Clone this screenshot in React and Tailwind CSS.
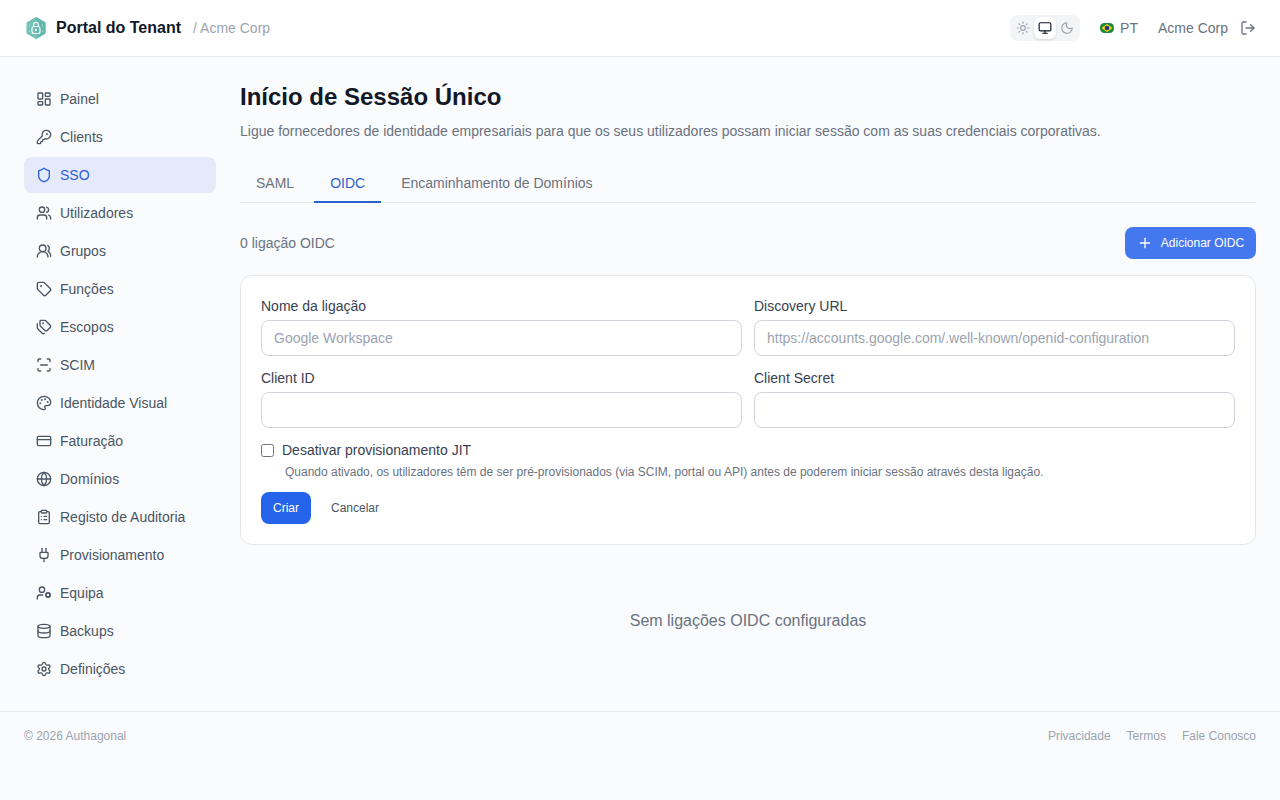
import React from "react";
import { LayoutDashboard, KeyRound, Shield, Users, UsersRound, Tag, Tags, ScanLine, Palette, CreditCard, Globe, ClipboardList, Plug, UserCog, Database, Settings, Sun, Monitor, Moon, LogOut, Plus } from "lucide-react";

const nav = [
  ["Painel", LayoutDashboard], ["Clients", KeyRound], ["SSO", Shield], ["Utilizadores", Users], ["Grupos", UsersRound],
  ["Funções", Tag], ["Escopos", Tags], ["SCIM", ScanLine], ["Identidade Visual", Palette], ["Faturação", CreditCard],
  ["Domínios", Globe], ["Registo de Auditoria", ClipboardList], ["Provisionamento", Plug], ["Equipa", UserCog],
  ["Backups", Database], ["Definições", Settings],
];

function Logo() {
  return (
    <svg width="24" height="24" viewBox="0 0 24 24" fill="none">
      <path d="M12 1 21.500 6.500v11L12 23 2.500 17.500V6.500Z" fill="#72c2b8" />
      <path d="M12 1 21.500 6.500v11L12 23Z" fill="#65b8ae" />
      <rect x="8" y="10.500" width="8" height="7" rx="2" stroke="#fff" strokeWidth="1.100" />
      <path d="M9.700 10.500V8.500a2.300 2.300 0 0 1 4.600 0v2" stroke="#fff" strokeWidth="1.100" />
      <circle cx="12" cy="14" r="1.100" fill="#fff" />
      <g fill="#d5efeb">
        <circle cx="5.500" cy="9" r=".6" />
        <circle cx="18.500" cy="9" r=".6" />
        <circle cx="5.500" cy="15" r=".6" />
        <circle cx="18.500" cy="15" r=".6" />
        <circle cx="12" cy="20" r=".6" />
      </g>
    </svg>
  );
}

function Flag() {
  return (
    <svg width="14" height="14" viewBox="0 0 14 14">
      <rect x="0" y="2" width="14" height="10" rx="4.500" fill="#1b8a3a" />
      <path d="M7 3 12.500 7 7 11 1.500 7Z" fill="#f4d516" />
      <circle cx="7" cy="7" r="2.300" fill="#24357f" />
    </svg>
  );
}

function Field({ label, placeholder }) {
  return (
    <div className="flex flex-col">
      <label className="text-sm leading-5 text-[#374151] mb-1">{label}</label>
      <input placeholder={placeholder} className="h-9 w-full rounded-lg border border-[#d1d5db] bg-white px-3 text-sm text-[#111827] placeholder:text-[#9ca3af] outline-none" />
    </div>
  );
}

export default function App() {
  return (
    <div className="min-h-[800px] bg-[#f9fbfd] flex flex-col font-['Liberation_Sans',Arial,sans-serif]">
      <header className="h-[57px] shrink-0 bg-white border-b border-[#e5e7eb] flex items-center justify-between px-6">
        <div className="flex items-center">
          <Logo />
          <span className="ml-2 text-base font-bold text-[#111827]">Portal do Tenant</span>
          <span className="ml-3 text-sm text-[#9ca3af]">/ Acme Corp</span>
        </div>
        <div className="flex items-center">
          <div className="flex items-center justify-center rounded-lg bg-[#f3f4f6] h-[26px] w-[70px]">
            <span className="w-[22px] h-[22px] flex items-center justify-center text-[#9ca3af]"><Sun size={14} /></span>
            <span className="w-[22px] h-[22px] flex items-center justify-center rounded-md bg-white text-[#111827] shadow-sm"><Monitor size={14} /></span>
            <span className="w-[22px] h-[22px] flex items-center justify-center text-[#9ca3af]"><Moon size={14} /></span>
          </div>
          <span className="ml-5 flex items-center gap-1.5 text-sm text-[#6b7280]"><Flag />PT</span>
          <span className="ml-5 text-sm text-[#6b7280]">Acme Corp</span>
          <LogOut size={16} className="ml-3 text-[#6b7280]" />
        </div>
      </header>

      <div className="flex flex-1">
        <aside className="w-[240px] shrink-0 pl-6 pr-6 pt-6">
          <nav className="flex flex-col gap-0.5">
            {nav.map(([name, Icon]) => {
              const active = name === "SSO";
              return (
                <div key={name} className={`h-9 flex items-center gap-2 px-3 rounded-lg text-sm ${active ? "bg-[#e4eafa] text-[#2b60d0]" : "text-[#4b5563]"}`}>
                  <Icon size={16} />
                  <span>{name}</span>
                </div>
              );
            })}
          </nav>
        </aside>

        <main className="flex-1 pr-6 pt-6">
          <h1 className="text-2xl leading-8 font-bold text-[#111827]">Início de Sessão Único</h1>
          <p className="mt-2 text-sm leading-5 text-[#6b7280]">Ligue fornecedores de identidade empresariais para que os seus utilizadores possam iniciar sessão com as suas credenciais corporativas.</p>

          <div className="mt-6 flex gap-1 border-b border-[#e5e7eb] h-[38px] text-sm">
            <div className="px-4 pt-2 text-[#6b7280]">SAML</div>
            <div className="px-4 pt-2 text-[#2b60d0] border-b-2 border-[#2b60d0] -mb-px">OIDC</div>
            <div className="px-4 pt-2 text-[#6b7280]">Encaminhamento de Domínios</div>
          </div>

          <div className="mt-6 flex items-center justify-between">
            <span className="text-sm text-[#6b7280]">0 ligação OIDC</span>
            <button className="h-8 w-[131px] flex items-center justify-center gap-2 rounded-lg bg-[#4478ee] text-xs text-white">
              <Plus size={16} />
              Adicionar OIDC
            </button>
          </div>

          <div className="mt-4 rounded-xl border border-[#e5e7eb] bg-white p-5">
            <div className="grid grid-cols-2 gap-x-3 gap-y-3">
              <Field label="Nome da ligação" placeholder="Google Workspace" />
              <Field label="Discovery URL" placeholder="https://accounts.google.com/.well-known/openid-configuration" />
              <Field label="Client ID" />
              <Field label="Client Secret" />
            </div>
            <label className="mt-3 flex items-center gap-2 text-sm leading-5 text-[#374151]">
              <input type="checkbox" className="w-[13px] h-[13px] appearance-none rounded-[2.500px] border border-[#767676] bg-white" />
              Desativar provisionamento JIT
            </label>
            <p className="mt-1 ml-6 text-xs leading-4 text-[#6b7280]">Quando ativado, os utilizadores têm de ser pré-provisionados (via SCIM, portal ou API) antes de poderem iniciar sessão através desta ligação.</p>
            <div className="mt-3 flex items-center gap-2">
              <button className="h-8 px-3 rounded-lg bg-[#2563eb] text-xs text-white">Criar</button>
              <button className="h-8 px-3 rounded-lg text-xs text-[#4b5563]">Cancelar</button>
            </div>
          </div>

          <div className="mt-16 text-center text-base leading-6 text-[#6b7280]">Sem ligações OIDC configuradas</div>
        </main>
      </div>

      <footer className="mt-6 h-[89px] shrink-0 border-t border-[#e5e7eb] px-6 pt-4 flex justify-between text-xs leading-4 text-[#9ca3af]">
        <span>© 2026 Authagonal</span>
        <div className="flex gap-4">
          <span>Privacidade</span>
          <span>Termos</span>
          <span>Fale Conosco</span>
        </div>
      </footer>
    </div>
  );
}
